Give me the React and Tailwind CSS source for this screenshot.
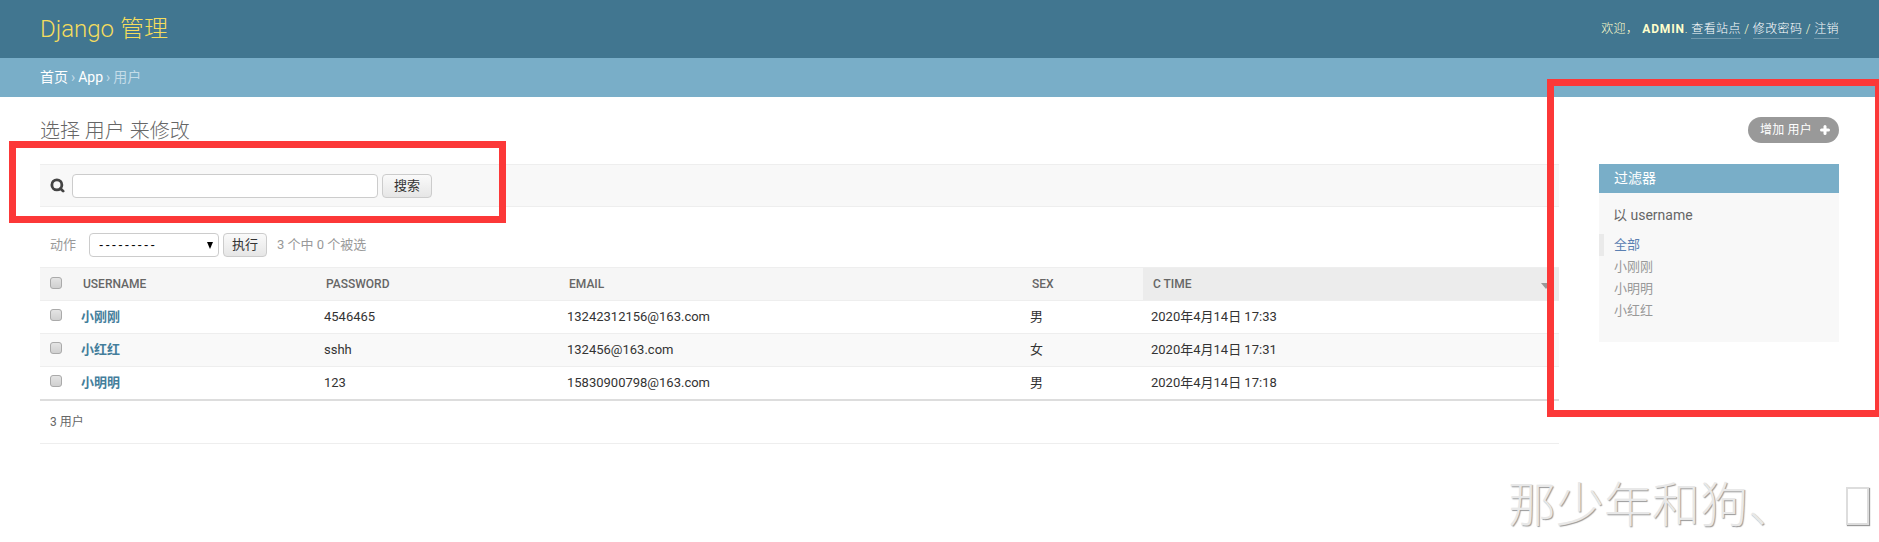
import React from 'react';
import { Search, Plus } from 'lucide-react';

const rows = [
  { name: '小刚刚', password: '4546465', email: '13242312156@163.com', sex: '男', time: '2020年4月14日 17:33' },
  { name: '小红红', password: 'sshh', email: '132456@163.com', sex: '女', time: '2020年4月14日 17:31' },
  { name: '小明明', password: '123', email: '15830900798@163.com', sex: '男', time: '2020年4月14日 17:18' },
];

const filters = ['小刚刚', '小明明', '小红红'];

const Checkbox = () => (
  <input
    type="checkbox"
    className="appearance-none block w-[12px] h-[12px] rounded-[3px] border border-[#aaa] bg-gradient-to-b from-[#e4e4e4] to-[#d0d0d0]"
  />
);

const GreyButton = ({ children, className }) => (
  <button className={`h-[24px] rounded-[4px] border border-[#ccc] bg-gradient-to-b from-[#fafafa] to-[#e6e6e6] text-[13px] text-[#333] ${className}`}>
    {children}
  </button>
);

const App = () => {
  return (
    <div className="relative h-[542px] overflow-hidden bg-white font-['Roboto','Noto_Sans_CJK_SC',sans-serif] text-[13px] text-[#333]">
      {/* Header */}
      <header className="flex h-[58px] items-center justify-between bg-[#417690] px-[40px]">
        <h1 className="text-[24px] font-light text-[#f5dd5d]">Django 管理</h1>
        <div className="flex items-center text-[12px] font-light tracking-[0.4px] text-[#ffc]">
          <span>欢迎，</span>
          <strong className="ml-[4px] font-bold tracking-[0.8px]">ADMIN</strong>
          <span>.&nbsp;</span>
          <a className="border-b border-white/25 text-white">查看站点</a>
          <span>&nbsp;/&nbsp;</span>
          <a className="border-b border-white/25 text-white">修改密码</a>
          <span>&nbsp;/&nbsp;</span>
          <a className="border-b border-white/25 text-white">注销</a>
        </div>
      </header>

      {/* Breadcrumbs */}
      <div className="flex h-[39px] items-center gap-[3px] bg-[#79aec8] px-[40px] text-[14px] text-[#c4dce8]">
        <a className="text-white">首页</a>
        <span>›</span>
        <a className="text-white">App</a>
        <span>›</span>
        <span>用户</span>
      </div>

      {/* Content */}
      <main className="px-[40px] pt-[20px]">
        <div className="mb-[21px] flex h-[26px] items-center justify-between">
          <h2 className="mt-[2px] text-[20px] font-light text-[#666]">选择 用户 来修改</h2>
          <a className="flex h-[26px] items-center gap-[7px] rounded-[15px] bg-[#999] pl-[12px] pr-[8px] text-[12px] tracking-[0.2px] text-white">
            增加 用户
            <Plus size={12} strokeWidth={6} />
          </a>
        </div>

        <div className="flex gap-[40px]">
          <div className="min-w-0 flex-1">
            {/* Search */}
            <div className="flex h-[43px] items-center border-y border-[#eee] bg-[#f8f8f8] pl-[10px]">
              <Search size={15} strokeWidth={4.5} className="text-[#444]" />
              <input className="ml-[7px] h-[24px] w-[306px] rounded-[4px] border border-[#ccc] bg-white" />
              <GreyButton className="ml-[4px] w-[50px]">搜索</GreyButton>
            </div>

            {/* Actions */}
            <div className="mt-[26px] flex h-[24px] items-center pl-[10px] text-[13px] text-[#999]">
              <span className="w-[39px]">动作</span>
              <div className="relative h-[24px] w-[130px]">
                <select className="h-[24px] w-full appearance-none rounded-[4px] border border-[#ccc] bg-white pl-[9px] font-['Liberation_Sans',sans-serif] text-[13px] tracking-[2.1px] text-black">
                  <option>---------</option>
                </select>
                <span className="absolute right-[6px] top-[9px] h-0 w-0 border-x-[3px] border-t-[7px] border-x-transparent border-t-black" />
              </div>
              <GreyButton className="ml-[4px] w-[44px]">执行</GreyButton>
              <span className="ml-[10px]">3 个中 0 个被选</span>
            </div>

            {/* Result table */}
            <table className="mt-[10px] w-full table-fixed border-collapse">
              <thead>
                <tr className="h-[33px] border-y border-[#eee] bg-[#f6f6f6] text-left text-[12px] font-semibold uppercase text-[#666]">
                  <th className="w-[33px] pl-[10px] pt-[9px] align-top"><Checkbox /></th>
                  <th className="w-[243px] pl-[10px] font-medium">Username</th>
                  <th className="w-[243px] pl-[10px] font-medium">Password</th>
                  <th className="w-[463px] pl-[10px] font-medium">Email</th>
                  <th className="w-[121px] pl-[10px] font-medium">Sex</th>
                  <th className="relative bg-[#ececec] pl-[10px] font-medium">
                    C Time
                    <span className="absolute right-[8px] top-[15px] h-0 w-0 border-x-[5px] border-t-[6px] border-x-transparent border-t-[#999]" />
                  </th>
                </tr>
              </thead>
              <tbody>
                {rows.map((row, index) => (
                  <tr key={index} className={`h-[33px] border-b border-[#eee] ${index === 1 ? 'bg-[#f9f9f9]' : 'bg-white'} ${index === 2 ? 'border-b-2 border-b-[#ddd]' : ''}`}>
                    <td className="pl-[10px] pt-[8px] align-top"><Checkbox /></td>
                    <td className="pl-[8px] font-bold text-[#447e9b]">{row.name}</td>
                    <td className="pl-[8px]">{row.password}</td>
                    <td className="pl-[8px]">{row.email}</td>
                    <td className="pl-[8px]">{row.sex}</td>
                    <td className="pl-[8px]">{row.time}</td>
                  </tr>
                ))}
              </tbody>
            </table>

            <p className="flex h-[43px] items-center border-b border-[#eee] pl-[10px] text-[12px] text-[#666]">3 用户</p>
          </div>

          {/* Filter sidebar */}
          <aside className="h-[178px] w-[240px] shrink-0 bg-[#f8f8f8]">
            <h3 className="flex h-[29px] items-center bg-[#79aec8] pl-[15px] text-[14px] font-normal text-white">过滤器</h3>
            <h4 className="mt-[12px] pl-[14px] text-[14px] leading-[20px] text-[#666]">以 username</h4>
            <ul className="mt-[9px] text-[13px]">
              <li className="flex h-[22px] items-center border-l-[5px] border-[#eaeaea] pl-[10px] text-[#5b80b2]">全部</li>
              {filters.map((name) => (
                <li key={name} className="flex h-[22px] items-center pl-[15px] text-[#999]">{name}</li>
              ))}
            </ul>
          </aside>
        </div>
      </main>

      {/* Red marks drawn over the screenshot */}
      <div className="absolute left-[9px] top-[141px] h-[82px] w-[497px] border-[7px] border-[#fc3838]" />
      <div className="absolute left-[1547px] top-[79px] h-[338px] w-[335px] border-[7px] border-[#fc3838]" />

      {/* Watermark */}
      <div className="absolute left-[1508px] top-[474px] flex items-center whitespace-nowrap text-[48px] font-light leading-[64px] text-[#e8e8e8] [text-shadow:1px_1px_1px_#999]">
        那少年和狗、
        <span className="ml-[50px] h-[38px] w-[23px] border-2 border-[#ddd] shadow-[1px_1px_1px_#999]" />
      </div>
    </div>
  );
};

export default App;
